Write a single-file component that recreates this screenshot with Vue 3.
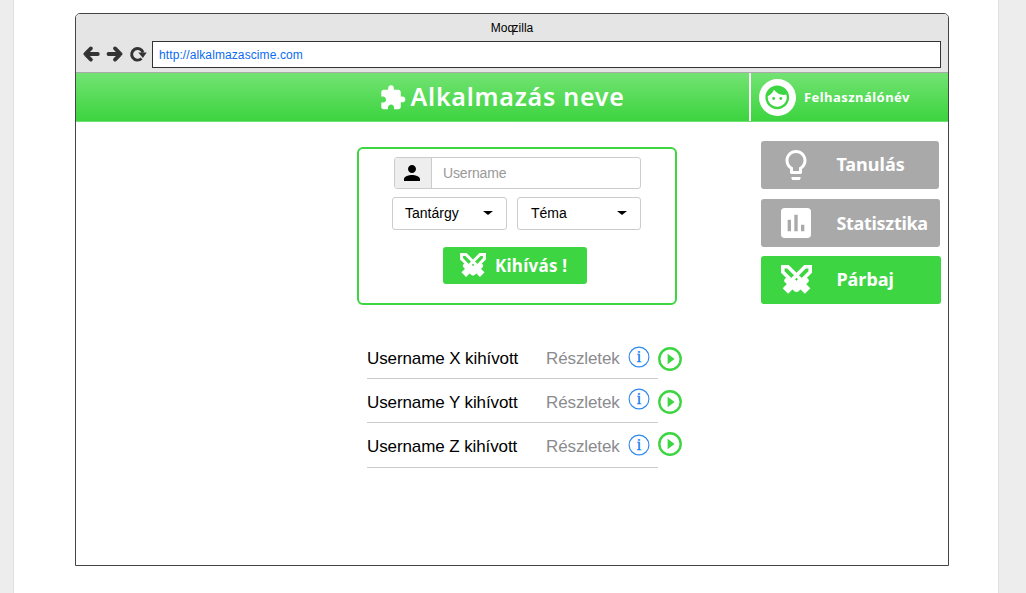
<script setup>
const icons = {
  puzzle: 'M20.5 11H19V7c0-1.1-.9-2-2-2h-4V3.5C13 2.12 11.88 1 10.5 1S8 2.12 8 3.5V5H4c-1.1 0-1.99.9-1.99 2v3.8H3.5c1.49 0 2.7 1.21 2.7 2.7s-1.21 2.7-2.7 2.7H2V20c0 1.1.9 2 2 2h3.8v-1.5c0-1.49 1.21-2.7 2.7-2.7 1.49 0 2.7 1.21 2.7 2.7V22H17c1.1 0 2-.9 2-2v-4h1.5c1.38 0 2.5-1.12 2.5-2.5S21.88 11 20.5 11z',
  face: 'M9 11.75c-.69 0-1.25.56-1.25 1.25s.56 1.25 1.25 1.25 1.25-.56 1.25-1.25-.56-1.25-1.25-1.25zm6 0c-.69 0-1.25.56-1.25 1.25s.56 1.25 1.25 1.25 1.25-.56 1.25-1.25-.56-1.25-1.25-1.25zM12 2C6.48 2 2 6.48 2 12s4.48 10 10 10 10-4.48 10-10S17.52 2 12 2zm0 18c-4.41 0-8-3.59-8-8 0-.29.02-.58.05-.86 2.36-1.05 4.23-2.98 5.21-5.37C11.07 8.33 14.05 10 17.42 10c.78 0 1.53-.09 2.25-.26.21.71.33 1.47.33 2.26 0 4.41-3.59 8-8 8z',
  person: 'M12 12c2.21 0 4-1.79 4-4s-1.79-4-4-4-4 1.79-4 4 1.79 4 4 4zm0 2c-2.67 0-8 1.34-8 4v2h16v-2c0-2.66-5.33-4-8-4z',
  bulb: 'M9 21c0 .55.45 1 1 1h4c.55 0 1-.45 1-1v-1H9v1zm3-19C8.14 2 5 5.14 5 9c0 2.38 1.19 4.47 3 5.74V17c0 .55.45 1 1 1h6c.55 0 1-.45 1-1v-2.26c1.81-1.27 3-3.36 3-5.74 0-3.86-3.14-7-7-7zm2.85 11.1l-.85.6V16h-4v-2.3l-.85-.6C7.8 12.16 7 10.63 7 9c0-2.76 2.24-5 5-5s5 2.24 5 5c0 1.63-.8 3.16-2.15 4.1z',
  chart: 'M19 3H5c-1.1 0-2 .9-2 2v14c0 1.1.9 2 2 2h14c1.1 0 2-.9 2-2V5c0-1.1-.9-2-2-2zM9 17H7v-7h2v7zm4 0h-2V7h2v10zm4 0h-2v-4h2v4z',
}
const rows = [
  { id: 'x', text: 'Username X kihívott' },
  { id: 'y', text: 'Username Y kihívott' },
  { id: 'z', text: 'Username Z kihívott' },
]
</script>

<template>
  <div class="canvas">
    <svg class="defs" width="0" height="0">
      <symbol id="swords" viewBox="0 0 31 30">
        <g v-for="m in ['', 'translate(31 0) scale(-1 1)']" :key="m" :transform="m" fill="none" stroke="#fff">
          <path d="M1.8 1.8H7L19.500 14.300L14.300 19.500L1.800 7Z" stroke-width="3.6" />
          <path d="M16 24L25 15.500" stroke-width="5.400" stroke-linecap="round" />
          <path d="M17 16.500L26.600 26" stroke-width="7.800" />
        </g>
        <path d="M10 17h11l-2 7h-7z" fill="#fff" />
      </symbol>
    </svg>
    <div class="sheet">
      <div class="browser">
        <div class="chrome">
          <div class="tab-title"><span>Moq</span><span class="tight">zilla</span></div>
          <div class="nav">
            <svg class="nav-icons" width="66" height="20" viewBox="0 0 66 20" fill="none" stroke="#333" stroke-width="3.8" stroke-linecap="round" stroke-linejoin="round">
              <path d="M8.900 4.400L3.300 10l5.600 5.600M3.500 10H15.800" />
              <path d="M33 4.400L38.600 10l-5.600 5.600M38.300 10H26.500" />
              <path d="M59.500 14.500A5.800 5.800 0 1 1 61 8.500" stroke-width="2.900" stroke-linecap="butt" />
              <path d="M56.300 8.500h8.400l-3.800 5.500z" fill="#333" stroke="none" />
            </svg>
            <div class="url">http://alkalmazascime.com</div>
          </div>
        </div>
        <header class="topbar">
          <div class="brand">
            <svg width="27.500" height="27.500" viewBox="0 0 24 24" fill="#fff"><path :d="icons.puzzle" /></svg>
            <h1>Alkalmazás neve</h1>
          </div>
          <div class="user">
            <span class="avatar"><svg width="28.500" height="28.500" viewBox="0 0 24 24" fill="#3ed542"><path :d="icons.face" /></svg></span>
            <span class="user-name">Felhasználónév</span>
          </div>
        </header>
        <div class="body">
          <main class="main">
            <section class="card">
              <div class="group">
                <span class="addon"><svg width="24" height="24" viewBox="0 0 24 24"><path :d="icons.person" /></svg></span>
                <span class="field">Username</span>
              </div>
              <div class="selects">
                <div class="select subject"><span>Tantárgy</span><i class="caret"></i></div>
                <div class="select theme"><span>Téma</span><i class="caret"></i></div>
              </div>
              <div class="challenge">
                <svg width="26" height="25"><use href="#swords" /></svg>
                <span>Kihívás !</span>
              </div>
            </section>
            <ul class="list">
              <li v-for="r in rows" :key="r.id" :class="['row', r.id]">
                <span class="who">{{ r.text }}</span>
                <span class="details">Részletek</span>
                <svg class="info" width="22" height="22" viewBox="0 0 22 22">
                  <circle cx="11" cy="11" r="9.900" fill="none" stroke="#2a86f0" stroke-width="1.100" />
                  <text class="info-i" x="11" y="16" text-anchor="middle">i</text>
                </svg>
                <svg class="play" width="24" height="24" viewBox="0 0 24 24">
                  <circle cx="12" cy="12" r="10.700" fill="none" stroke="#3ed542" stroke-width="2.400" />
                  <path d="M9.600 6.700v10.600l7-5.300z" fill="#3ed542" />
                </svg>
              </li>
            </ul>
          </main>
          <aside class="menu">
            <div class="item learn">
              <span class="ico"><svg width="36" height="36" viewBox="0 0 24 24" fill="#fff"><path :d="icons.bulb" /></svg></span>
              <span class="label">Tanulás</span>
            </div>
            <div class="item stats">
              <span class="ico"><svg width="40" height="40" viewBox="0 0 24 24" fill="#fff"><path :d="icons.chart" /></svg></span>
              <span class="label">Statisztika</span>
            </div>
            <div class="item duel">
              <span class="ico"><svg width="31" height="30"><use href="#swords" /></svg></span>
              <span class="label">Párbaj</span>
            </div>
          </aside>
        </div>
      </div>
    </div>
  </div>
</template>

<style>
body { margin: 0; background: #ededed; }
</style>

<style scoped>
* { box-sizing: border-box; }
.canvas { height: 593px; width: 1026px; overflow: hidden; background: #ededed; font-family: "Liberation Sans", Arial, sans-serif; }
.defs { position: absolute; }
svg { display: block; flex: none; }
.sheet { margin-left: 13px; width: 986px; height: 593px; background: #fff; border: solid #e0e0e0; border-width: 0 1px; padding: 13px 0 0 61px; }
.browser { width: 874px; height: 553px; border: 1px solid #444; border-radius: 5px 5px 0 0; background: #fff; overflow: hidden; }
.chrome { height: 59px; background: #e5e5e5; border-bottom: 1px solid #aaa; }
.tab-title { height: 27px; line-height: 28px; font-size: 12px; text-align: center; color: #000; }
.tight { margin-left: -1.500px; }
.nav { display: flex; }
.nav-icons { margin: 3px 4px 0 6px; }
.url { width: 789px; height: 27px; border: 1px solid #333; background: #fff; font-size: 12px; letter-spacing: .1px; line-height: 26px; padding-left: 6px; color: #0b6bef; }
.topbar { height: 49px; display: flex; background: linear-gradient(#73e373, #3cd43f); color: #fff; border-bottom: 1px solid #6fe072; font-family: "Noto Sans", sans-serif; }
.brand { width: 673px; display: flex; padding: 11px 0 0 303px; }
h1 { margin: -6px 0 0 4px; font-size: 25px; line-height: 36px; font-weight: 600; letter-spacing: .75px; white-space: nowrap; }
.user { flex: 1; border-left: 2px solid #fff; display: flex; align-items: center; padding-left: 8px; }
.avatar { width: 37px; height: 37px; border-radius: 50%; background: #fff; display: flex; align-items: center; justify-content: center; }
.user-name { margin-left: 8px; font-size: 13px; font-weight: 700; letter-spacing: .45px; white-space: nowrap; }
.body { display: flex; }
.main { width: 685.4px; padding: 25px 0 0 281px; }
.card { width: 320px; height: 158px; border: 2px solid #3ed542; border-radius: 6px; padding: 8px 0 0 33px; }
.group { margin-left: 2px; width: 247px; height: 32px; display: flex; border: 1px solid #ccc; border-radius: 3px; overflow: hidden; }
.addon { width: 37px; background: #eee; border-right: 1px solid #ccc; display: flex; justify-content: center; align-items: center; padding: 0 2px 0 0; }
.field { padding-left: 11px; font-size: 14px; letter-spacing: -.15px; line-height: 30px; color: #999; }
.selects { display: flex; gap: 10px; margin-top: 8px; }
.select { height: 33px; border: 1px solid #ccc; border-radius: 3px; display: flex; justify-content: space-between; padding: 0 13px 0 12px; font-size: 14px; line-height: 30px; }
.subject { width: 115px; }
.theme { width: 124px; padding-left: 13px; }
.caret { margin-top: 13px; width: 0; height: 0; border: 5px solid transparent; border-top: 4.500px solid #000; border-bottom: 0; }
.challenge { margin: 17px 0 0 51px; width: 144px; height: 37px; border-radius: 3px; background: #3ed542; color: #fff; display: flex; align-items: center; padding-left: 17px; gap: 9px; font: 700 17px/36px "Noto Sans", sans-serif; letter-spacing: .25px; white-space: nowrap; }
.list { list-style: none; margin: 33px 0 0 10px; padding: 0; width: 316px; }
.row { height: 44px; display: flex; font-size: 17px; letter-spacing: -.1px; line-height: 41px; background: linear-gradient(#ccc, #ccc) 0 40px / 291px 1px no-repeat; }
.who { width: 179px; white-space: nowrap; color: #000; }
.details { width: 82px; color: #8b8b8f; }
.info { margin-top: 8px; }
.info-i { font: 16px "Liberation Serif", serif; fill: #1279f0; stroke: #1279f0; stroke-width: .3px; letter-spacing: 0; }
.play { margin: 9px 0 0 8px; }
.y .info { margin-top: 6.400px; }
.y .play { margin-top: 7.500px; }
.z .play { margin-top: 6px; }
.z { background-position: 0 41px; }
.menu { padding-top: 19px; display: flex; flex-direction: column; }
.item { height: 48px; border-radius: 3px; background: #a9a9a9; color: #fff; display: flex; align-items: center; }
.learn { width: 178px; margin-bottom: 10px; }
.stats { width: 179px; margin-bottom: 9px; }
.duel { width: 180px; background: #3ed542; }
.ico { width: 70px; display: flex; justify-content: center; }
.label { margin-left: 5px; font: 700 18px/46px "Noto Sans", sans-serif; white-space: nowrap; }
.learn .label, .duel .label { margin-top: -2px; }
.stats .label { letter-spacing: -.3px; }
</style>
